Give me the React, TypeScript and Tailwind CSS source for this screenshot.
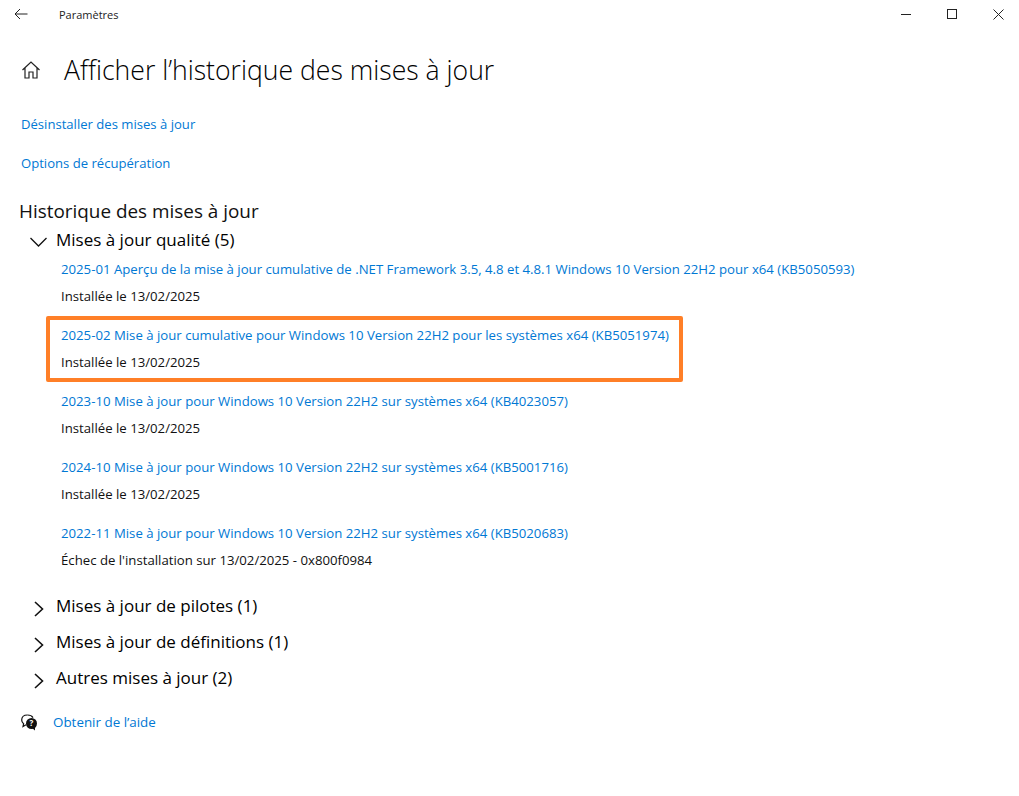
import React from 'react';

const updates = [
  { title: '2025-01 Aperçu de la mise à jour cumulative de .NET Framework 3.5, 4.8 et 4.8.1 Windows 10 Version 22H2 pour x64 (KB5050593)', status: 'Installée le 13/02/2025' },
  { title: '2025-02 Mise à jour cumulative pour Windows 10 Version 22H2 pour les systèmes x64 (KB5051974)', status: 'Installée le 13/02/2025', highlighted: true },
  { title: '2023-10 Mise à jour pour Windows 10 Version 22H2 sur systèmes x64 (KB4023057)', status: 'Installée le 13/02/2025' },
  { title: '2024-10 Mise à jour pour Windows 10 Version 22H2 sur systèmes x64 (KB5001716)', status: 'Installée le 13/02/2025' },
  { title: '2022-11 Mise à jour pour Windows 10 Version 22H2 sur systèmes x64 (KB5020683)', status: "Échec de l'installation sur 13/02/2025 - 0x800f0984" },
];

const collapsed = ['Mises à jour de pilotes (1)', 'Mises à jour de définitions (1)', 'Autres mises à jour (2)'];

const App: React.FC = () => {
  return (
    <div className="w-[1019px] h-[796px] bg-white overflow-hidden text-black font-['Open_Sans','Noto_Sans',sans-serif]">
      <div className="h-[32px] flex items-center">
        <div className="w-[42px] flex justify-center pb-[4px]">
          <svg width="14" height="12" viewBox="0 0 14 12" fill="none" stroke="#222" strokeWidth="1">
            <path d="M13.5 6 H1 M6 1 L1 6 L6 11" />
          </svg>
        </div>
        <span className="ml-[17px] pb-[2px] text-[11px] text-[#222]">Paramètres</span>
        <div className="ml-auto -mr-[2px] flex items-center pb-[4px]">
          <div className="w-[46px] flex justify-center"><div className="w-[10px] h-px bg-[#222]" /></div>
          <div className="w-[46px] flex justify-center"><div className="w-[10px] h-[10px] border border-[#222]" /></div>
          <div className="w-[46px] flex justify-center">
            <svg width="11" height="11" viewBox="0 0 11 11" stroke="#222" strokeWidth="1"><path d="M0.5 0.5 L10.5 10.5 M10.5 0.5 L0.5 10.5" /></svg>
          </div>
        </div>
      </div>

      <div className="mt-[18px] flex items-center h-[40px]">
        <svg width="20" height="20" viewBox="0 0 20 20" fill="none" stroke="#222" strokeWidth="1.2" className="ml-[21px]">
          <path d="M1.5 10 L10 2 L18.5 10 M4 8 V18 H8 V12 H12 V18 H16 V8" />
        </svg>
        <h1 className="ml-[23px] text-[26.6px] font-light leading-[40px]">Afficher l’historique des mises à jour</h1>
      </div>

      <div className="ml-[21px] mt-[24px] flex flex-col gap-[19px] text-[13.1px] leading-[20px] text-[#0078d4]">
        <a>Désinstaller des mises à jour</a>
        <a>Options de récupération</a>
      </div>

      <h2 className="ml-[19px] mt-[24px] text-[18.9px] leading-[28px] text-[#111]">Historique des mises à jour</h2>

      <div className="ml-[30px] mt-[1px] h-[28px] flex items-center gap-[9px] text-[17px]">
        <svg width="17" height="10" viewBox="0 0 17 10" fill="none" stroke="#111" strokeWidth="1.3" className="shrink-0 mt-[4px]">
          <path d="M0.5 1 L8.5 9 L16.5 1" />
        </svg>
        <span>Mises à jour qualité (5)</span>
      </div>

      <div className="ml-[46px] -mt-[4px] flex flex-col">
        {updates.map((u) => (
          <div
            key={u.title}
            className={`h-[66px] w-[637px] border-4 rounded-[2px] pl-[11px] text-[13.2px] leading-[20px] whitespace-nowrap ${u.highlighted ? 'border-[#ff7f27]' : 'border-transparent'}`}
          >
            <div className="mt-[5px] text-[#0078d4]">{u.title}</div>
            <div className="mt-[7px] text-[#111]">{u.status}</div>
          </div>
        ))}
      </div>

      <div className="ml-[34px] mt-[8px] flex flex-col">
        {collapsed.map((label) => (
          <div key={label} className="h-[36px] flex items-center gap-[12px] text-[17px]">
            <svg width="10" height="16" viewBox="0 0 10 16" fill="none" stroke="#111" strokeWidth="1.6" className="shrink-0 mt-[6px]">
              <path d="M1 1 L8.5 8 L1 15" />
            </svg>
            <span>{label}</span>
          </div>
        ))}
      </div>

      <div className="ml-[21px] mt-[16px] flex items-center gap-[15px] text-[13.4px] leading-[20px] text-[#0078d4]">
        <svg width="17" height="17" viewBox="0 0 17 17" className="shrink-0">
          <path d="M6.5 1 C3 1 .7 3 .7 6 C.7 7.6 1.4 8.9 2.6 9.8 L2 12.5 L5 10.8" fill="none" stroke="#111" strokeWidth="1.2" />
          <path d="M6.5 1 C9 1 11 2 12 3.6" fill="none" stroke="#111" strokeWidth="1.2" />
          <circle cx="10.5" cy="9.5" r="5.5" fill="#111" />
          <path d="M11 14 L14 16.5 L14 12 Z" fill="#111" />
          <text x="10.5" y="12.3" textAnchor="middle" fontSize="8" fontWeight="700" fill="#fff">?</text>
        </svg>
        <a>Obtenir de l’aide</a>
      </div>
    </div>
  );
};

export default App;
